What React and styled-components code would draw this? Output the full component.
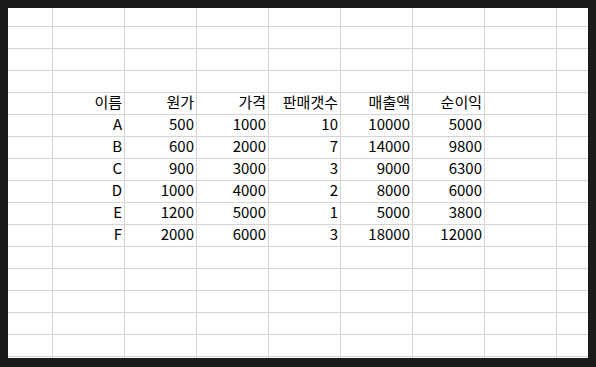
import React from "react";
import styled, { createGlobalStyle } from "styled-components";

const Global = createGlobalStyle`
  html, body { margin: 0; padding: 0; background: #1b1b1b; }
  body { padding: 8px 8px 9px 8px; }
  * { box-sizing: border-box; }
`;

const Sheet = styled.div`
  width: 580px;
  height: 350px;
  background: #ffffff;
  display: grid;
  grid-template-columns: 45px repeat(7, 72px) 1fr;
  grid-template-rows: 19px repeat(15, 22px) 1fr;
  overflow: hidden;
  font-family: "Noto Sans CJK KR", "Noto Sans", sans-serif;
  font-size: 15px;
  color: #000;
`;

const Cell = styled.div`
  border-right: ${(p) => (p.$lastCol ? "none" : "1px solid #d4d4d4")};
  border-bottom: ${(p) => (p.$lastRow ? "none" : "1px solid #d4d4d4")};
  display: flex;
  justify-content: flex-end;
  align-items: flex-start;
  padding-right: 2px;
  white-space: nowrap;
  min-width: 0;
  min-height: 0;
`;

const Value = styled.span`
  display: block;
  line-height: 18px;
`;

const header = ["이름", "원가", "가격", "판매갯수", "매출액", "순이익"];
const data = [
  ["A", "500", "1000", "10", "10000", "5000"],
  ["B", "600", "2000", "7", "14000", "9800"],
  ["C", "900", "3000", "3", "9000", "6300"],
  ["D", "1000", "4000", "2", "8000", "6000"],
  ["E", "1200", "5000", "1", "5000", "3800"],
  ["F", "2000", "6000", "3", "18000", "12000"],
];

const ROWS = 17;
const COLS = 9;

export default function App() {
  const content = {};
  header.forEach((h, i) => (content[`4-${i + 1}`] = h));
  data.forEach((r, ri) =>
    r.forEach((v, ci) => (content[`${ri + 5}-${ci + 1}`] = v))
  );
  const cells = [];
  for (let r = 0; r < ROWS; r++) {
    for (let c = 0; c < COLS; c++) {
      const v = content[`${r}-${c}`];
      cells.push(
        <Cell key={`${r}-${c}`} $lastCol={c === COLS - 1} $lastRow={r === ROWS - 1}>
          {v ? <Value>{v}</Value> : null}
        </Cell>
      );
    }
  }
  return (
    <>
      <Global />
      <Sheet>{cells}</Sheet>
    </>
  );
}
